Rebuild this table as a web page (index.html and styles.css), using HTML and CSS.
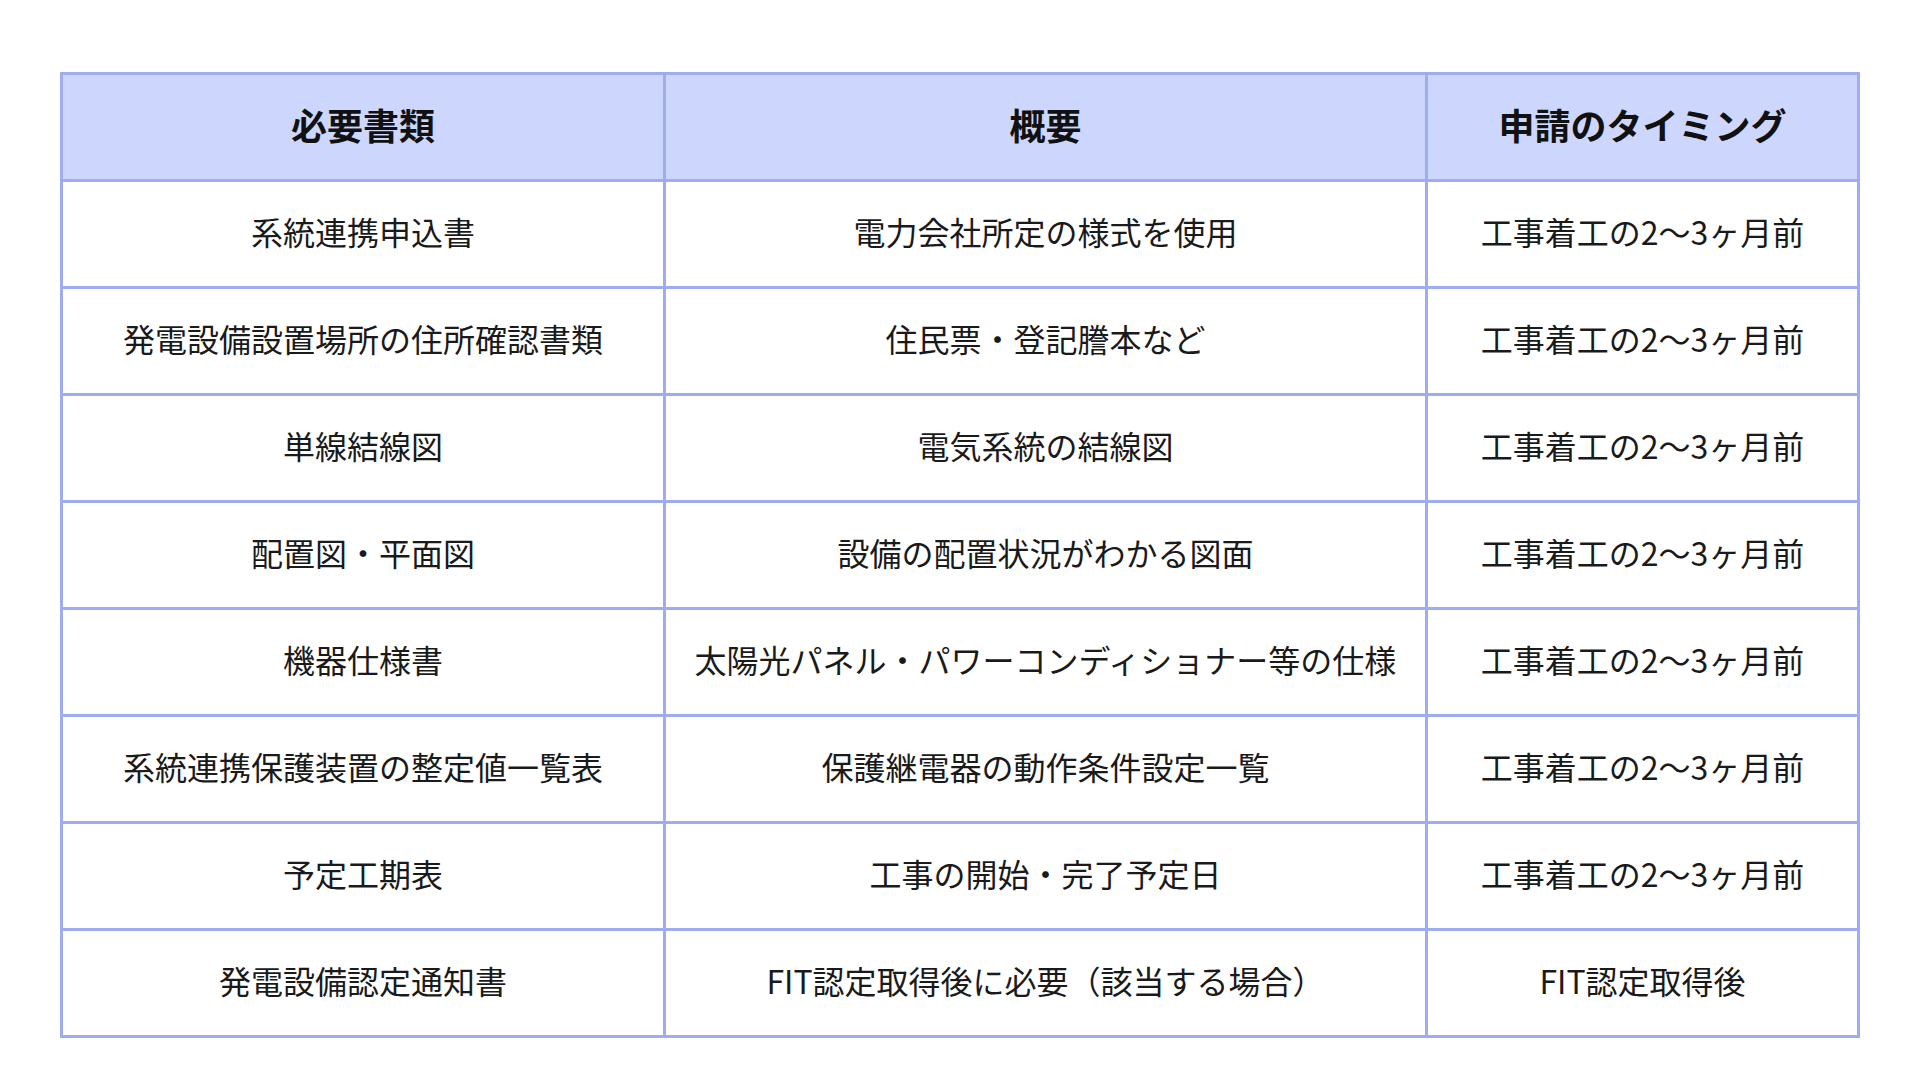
FILE: index.html
```html
<!DOCTYPE html>
<html lang="ja">
<head>
<meta charset="utf-8">
<title>必要書類</title>
<link rel="stylesheet" href="styles.css">
</head>
<body>
<main class="page">
  <table class="docs">
    <colgroup>
      <col class="c1">
      <col class="c2">
      <col class="c3">
    </colgroup>
    <thead>
      <tr>
        <th>必要書類</th>
        <th>概要</th>
        <th>申請のタイミング</th>
      </tr>
    </thead>
    <tbody>
      <tr><td>系統連携申込書</td><td>電力会社所定の様式を使用</td><td>工事着工の2～3ヶ月前</td></tr>
      <tr><td>発電設備設置場所の住所確認書類</td><td>住民票・登記謄本など</td><td>工事着工の2～3ヶ月前</td></tr>
      <tr><td>単線結線図</td><td>電気系統の結線図</td><td>工事着工の2～3ヶ月前</td></tr>
      <tr><td>配置図・平面図</td><td>設備の配置状況がわかる図面</td><td>工事着工の2～3ヶ月前</td></tr>
      <tr><td>機器仕様書</td><td>太陽光パネル・パワーコンディショナー等の仕様</td><td>工事着工の2～3ヶ月前</td></tr>
      <tr><td>系統連携保護装置の整定値一覧表</td><td>保護継電器の動作条件設定一覧</td><td>工事着工の2～3ヶ月前</td></tr>
      <tr><td>予定工期表</td><td>工事の開始・完了予定日</td><td>工事着工の2～3ヶ月前</td></tr>
      <tr><td>発電設備認定通知書</td><td>FIT認定取得後に必要（該当する場合）</td><td>FIT認定取得後</td></tr>
    </tbody>
  </table>
</main>
</body>
</html>
```

FILE: styles.css
```css
html, body {
  margin: 0;
  padding: 0;
  background: #ffffff;
}

body {
  font-family: "Noto Sans CJK JP", "Noto Sans", sans-serif;
  color: #111111;
}

.page {
  padding: 72px 60px 0 60px;
}

.docs {
  width: 1800px;
  table-layout: fixed;
  border-collapse: separate;
  border-spacing: 0;
  border: 3px solid #a0acf0;
}

.c1 { width: 603px; }
.c2 { width: 762px; }
.c3 { width: 429px; }

.docs th,
.docs td {
  height: 99px;
  padding: 0 0 5px 0;
  text-align: center;
  vertical-align: middle;
  border-right: 3px solid #a0acf0;
  border-bottom: 3px solid #a0acf0;
  box-sizing: content-box;
  white-space: nowrap;
  line-height: 1.2;
}

.docs th:last-child,
.docs td:last-child {
  border-right: none;
}

.docs tbody tr:last-child td {
  border-bottom: none;
}

.docs th {
  background: #cdd6fd;
  font-size: 36px;
  font-weight: 700;
  color: #111111;
}

.docs td {
  font-size: 32px;
  font-weight: 400;
  color: #1a1a1a;
}
```
